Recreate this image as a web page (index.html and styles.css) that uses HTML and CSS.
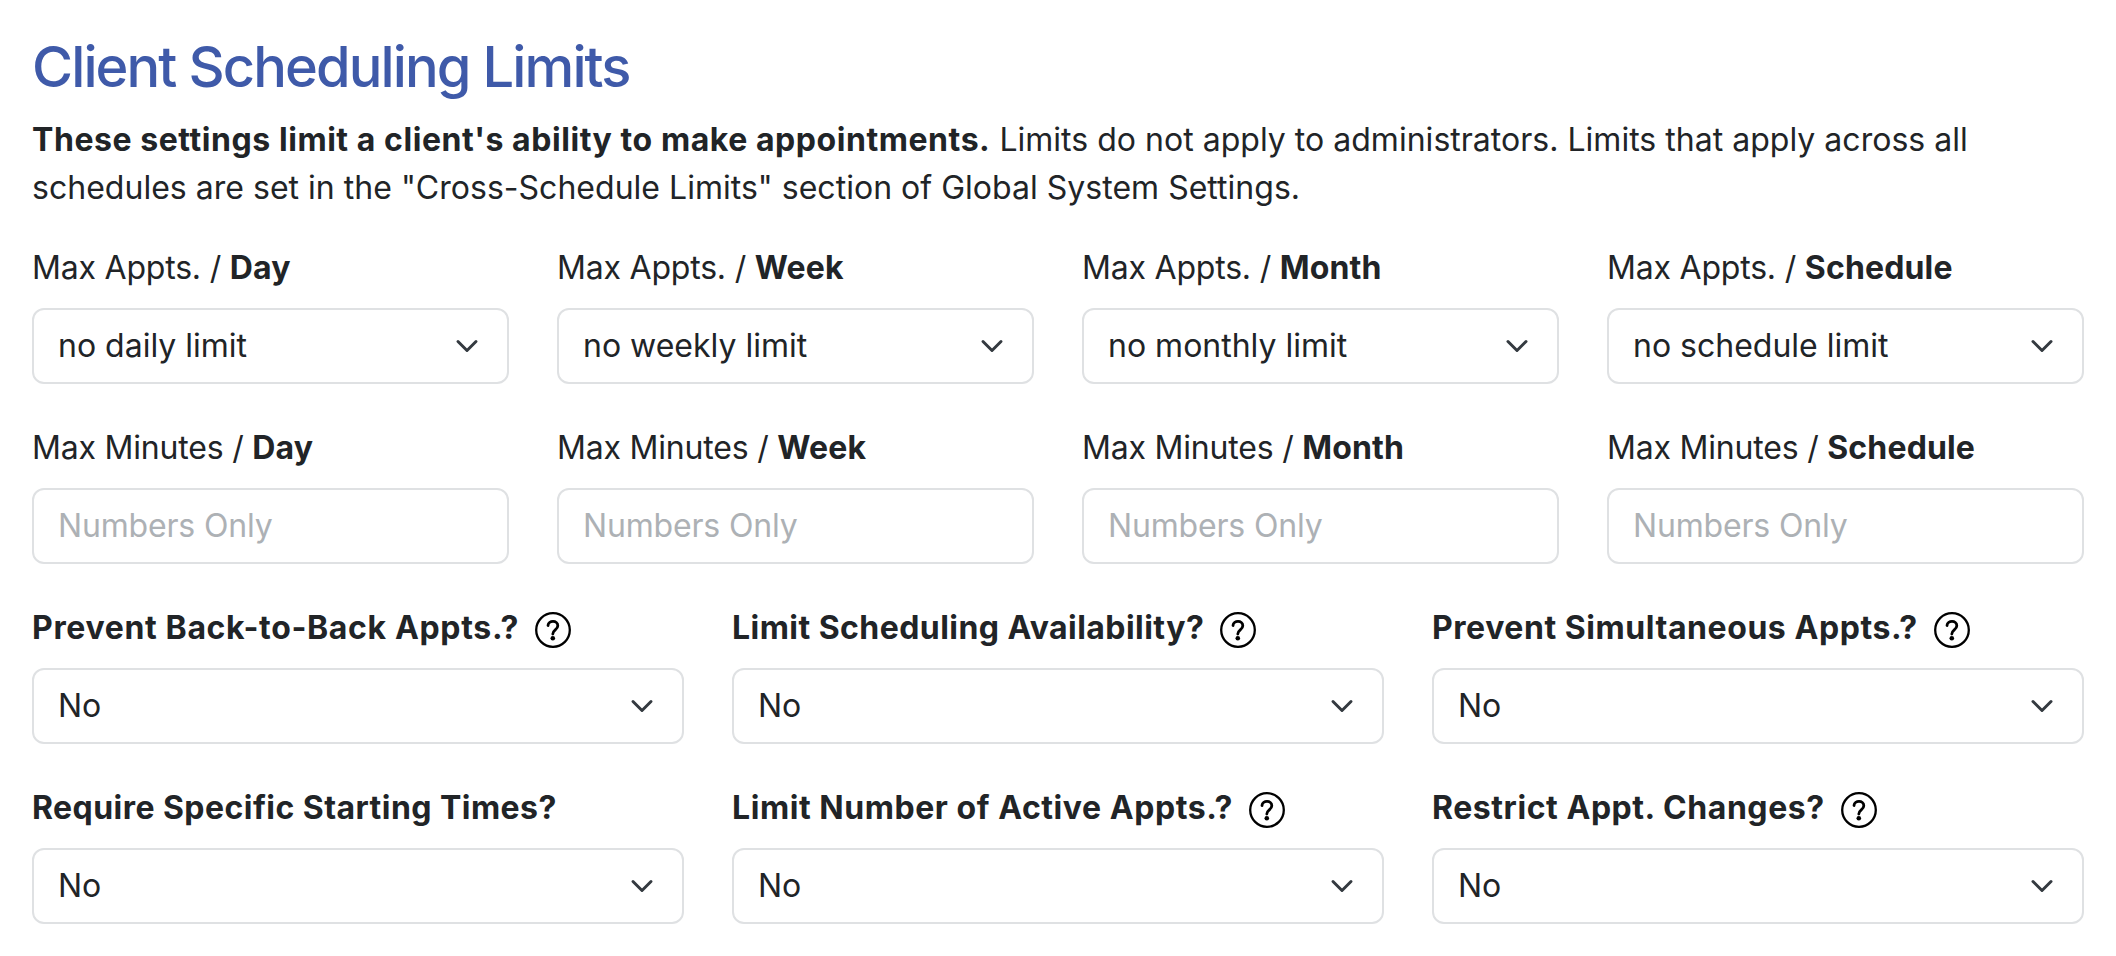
FILE: index.html
```html
<!DOCTYPE html>
<html lang="en">
<head>
<meta charset="utf-8">
<title>Client Scheduling Limits</title>
<link rel="stylesheet" href="styles.css">
</head>
<body>
<main class="panel"></main>
<script src="script.js"></script>
</body>
</html>
```

FILE: styles.css
```css
* { box-sizing: border-box; }
body { margin: 0; background: #fff; color: #212427; font-family: Inter, "Liberation Sans", sans-serif; font-size: 32px; line-height: 48px; letter-spacing: 0.02px; }
.panel { padding: 32px; }
.title { margin: 0; height: 71px; font-size: 56px; line-height: 71px; font-weight: 500; letter-spacing: -1.9px; color: #3f5aa9; }
.intro { margin: 13px 0 32px; white-space: nowrap; }
b { font-weight: 700; letter-spacing: 0.56px; }
.row { display: grid; gap: 48px; margin-bottom: 40px; }
.four { grid-template-columns: repeat(4, 1fr); }
.three { grid-template-columns: repeat(3, 1fr); }
.label { height: 48px; margin-bottom: 16px; display: flex; align-items: center; white-space: pre; letter-spacing: -0.2px; }
.four .label b { letter-spacing: 0.15px; }
.three .label b.tight { letter-spacing: 0.45px; }
.three .label b.loose { letter-spacing: 0.65px; }
.help { width: 36px; height: 36px; margin-left: 16px; margin-top: 4px; }
.control { height: 76px; border: 2px solid #dfe1e3; border-radius: 12px; padding: 0 28px 0 24px; display: flex; align-items: center; justify-content: space-between; letter-spacing: 0; }
.placeholder { color: #adb1b5; letter-spacing: -0.17px; }
.chevron { width: 24px; height: 24px; }
```

FILE: script.js
```js
const chevron = '<svg class="chevron" viewBox="0 0 16 16" fill="none" stroke="#343a40" stroke-linecap="round" stroke-linejoin="round" stroke-width="2"><path d="m2 5 6 6 6-6"/></svg>';
const help = '<svg class="help" viewBox="0 0 36 36" fill="none" stroke="#000" stroke-width="2.300"><circle cx="18" cy="18" r="16.800"/><path d="M13 13.500c.5-5.500 9.800-5.400 9.800.2 0 4.200-5 4.200-5 8.300" stroke-width="2.800" stroke-linecap="round"/><circle cx="17.800" cy="26.200" r="2.300" fill="#000" stroke="none"/></svg>';
const periods = ['Day', 'Week', 'Month', 'Schedule'];
const field = (label, value, kind = '', icon = '') =>
  `<div><div class="label"><span>${label}</span>${icon}</div><div class="control ${kind}"><span>${value}</span>${kind ? '' : chevron}</div></div>`;
const row = (kind, fields) => `<div class="row ${kind}">${fields.join('')}</div>`;
const question = ([label, hasHelp, tracking = '']) => field(`<b class="${tracking}">${label}</b>`, 'No', '', hasHelp ? help : '');
document.querySelector('.panel').innerHTML =
  `<h1 class="title">Client Scheduling Limits</h1>
  <p class="intro"><b>These settings limit a client's ability to make appointments.</b> Limits do not apply to administrators. Limits that apply across all<br>schedules are set in the "Cross-Schedule Limits" section of Global System Settings.</p>` +
  row('four', periods.map((p, i) => field(`Max Appts. / <b>${p}</b>`, `no ${['daily', 'weekly', 'monthly', 'schedule'][i]} limit`))) +
  row('four', periods.map(p => field(`Max Minutes / <b>${p}</b>`, 'Numbers Only', 'placeholder'))) +
  row('three', [['Prevent Back-to-Back Appts.?', 1, 'loose'], ['Limit Scheduling Availability?', 1, 'tight'], ['Prevent Simultaneous Appts.?', 1]].map(question)) +
  row('three', [['Require Specific Starting Times?', 0, 'tight'], ['Limit Number of Active Appts.?', 1], ['Restrict Appt. Changes?', 1]].map(question));
```
